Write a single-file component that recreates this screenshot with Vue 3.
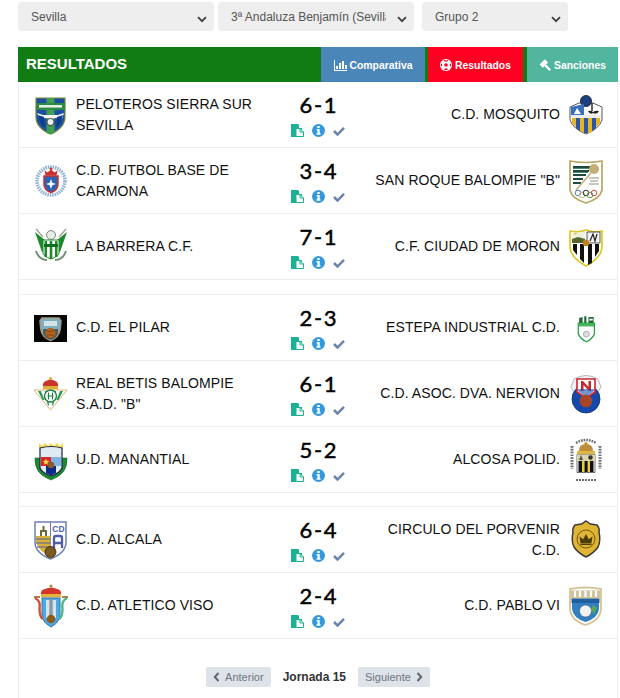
<script setup>
const crests = {
  peloteros: `<path d="M2 3H31V22Q31 33 16.500 39Q2 33 2 22Z" fill="#1a4fa3" stroke="#7a8a3a" stroke-width="1.200"/><path d="M12.500 3h8v35l-4 1.500-4-1.500z" fill="#3f9e50"/><rect x="2.600" y="8" width="27.800" height="7" fill="#2c8a45"/><rect x="5" y="10" width="23" height="2.600" fill="#e3efe0"/><path d="M3 18l6 2h15l6-2-2 6-6-1-5 1-5-1-6 1z" fill="#f4f4f4"/><circle cx="16.500" cy="27" r="3.600" fill="#eee" stroke="#222" stroke-width=".8"/><path d="M4 20l3 9 4 4-1-11zM29 20l-3 9-4 4 1-11z" fill="#0e3d8c"/>`,
  carmona: `<circle cx="17" cy="20" r="14" fill="#fff" stroke="#8fb0cf" stroke-width="3.600" stroke-dasharray="1.500 .9"/><path d="M10 15h14v8q0 6-7 8.500-7-2.500-7-8.500z" fill="#2a63b4" stroke="#c9302c" stroke-width="1.500"/><path d="M10.500 9.500l3 2 3.500-3 3.500 3 3-2-1 5H11.500z" fill="#c9302c"/><circle cx="17" cy="8" r="1.400" fill="#c9302c"/><path d="M17 18l1.300 3.700 3.700 1.300-3.700 1.300L17 28l-1.300-3.700L12 23l3.700-1.300z" fill="#fff"/>`,
  barrera: `<path d="M1 5l11 9v11H8zM33 5L22 14v11h4z" fill="#1c8a2b"/><path d="M2 2l7 8M32 2l-7 8" stroke="#9aa69a" stroke-width="1.400"/><circle cx="17" cy="8" r="4.500" fill="#e5ece5" stroke="#4d5a4d" stroke-width=".7"/><path d="M9 13h16v13q0 3-8 6-8-3-8-6z" fill="#fff" stroke="#1c8a2b"/><path d="M10.500 14H13v16h-2.500zM15.700 14h2.600v18h-2.600zM21 14h2.500v16H21z" fill="#1c8a2b"/><rect x="10" y="17" width="14" height="3" fill="#0f6d20"/><path d="M2 24q3 9 11 9M32 24q-3 9-11 9" fill="none" stroke="#6f9174" stroke-width="2"/>`,
  pilar: `<rect x="0" y="7" width="33" height="27" fill="#050505"/><path d="M8 10h17l2 3-1 9q-1 7-9.500 10.500Q8 29 7 22l-1-9z" fill="#7fb0c2" stroke="#a8987c" stroke-width="1.600"/><path d="M10 13h13v5H10z" fill="#d3e4e8"/><path d="M9 21h15v4q-1 5-7.500 7Q10 30 9 25z" fill="#4b5a5e"/><circle cx="16.500" cy="25" r="5" fill="#b5611b"/><path d="M13 23q4 2 7-1M13 27q4-1 7 1" stroke="#6e3a10" fill="none" stroke-width=".7"/>`,
  betis: `<path d="M0 16h33L16.500 36z" fill="#fff" stroke="#dcb672" stroke-width="1"/><path d="M4 17h3l3.500 9-2 0zM11 17h3l1 15-1.500-1.500zM19 17h3l-2.500 13.500L18 32zM26 17h3l-4.500 9-2 0z" fill="#2c9a55"/><circle cx="16.500" cy="22" r="6" fill="#fff" stroke="#1c7f40" stroke-width="1.400"/><path d="M14.500 18.500v7M18.500 18.500v7M13.500 22h6" stroke="#1c7f40" stroke-width="1.100"/><path d="M9 14q-1-6 3-7 4.500-3 9 0 4 1 3 7z" fill="#c8352b"/><rect x="9" y="12" width="15" height="3.200" fill="#e0ad35"/><circle cx="16.500" cy="4.500" r="1.600" fill="#e0ad35"/>`,
  manantial: `<path d="M5 3l3 3 3-3 3 3 3-3 3 3 3-3 3 3 3-3v6q-12-3-24 0z" fill="#f4da48"/><path d="M1 18q-1 16 16 22 17-6 16-22l-5 0v10l-11 8-11-8V18z" fill="#1c8a33" stroke="#14682a" stroke-width=".6"/><path d="M6 8q11-3 22 0v20q-2 5-11 8-9-3-11-8z" fill="#dfeaf5" stroke="#1b2a44" stroke-width="1.200"/><rect x="7" y="17" width="10" height="9" fill="#d7262c"/><rect x="17" y="17" width="10" height="9" fill="#7fb4e4"/><path d="M12 18.500l.9 2.200 2.300.2-1.700 1.500.5 2.300-2-1.200-2 1.200.5-2.300-1.700-1.500 2.300-.2z" fill="#f3dc43"/><path d="M12 26h10v7l-5 2.500-5-2.500z" fill="#0a2a88"/><circle cx="17" cy="25" r="3.300" fill="#8a5a2b"/>`,
  alcala: `<path d="M1 2H32V22Q32 33 16.500 39Q1 33 1 22Z" fill="#fff" stroke="#6f7db8" stroke-width="1.500"/><path d="M16.500 2v30" stroke="#6f7db8" stroke-width="1"/><path d="M2 16h14.500v20Q5 32 2 22z" fill="#d8b13a"/><path d="M2 19h14.500M2 23h14.500M3 27h13.500" stroke="#4e5f9e" stroke-width="1.200"/><path d="M7 16v-5h5v5M9.500 11V6" stroke="#6f6a45" stroke-width="2" fill="none"/><text x="24.500" y="12" class="crest-text" font-size="8.500">CD</text><path d="M20 28V18q0-2 2-2h4q2 0 2 2v10M20 23h8" fill="none" stroke="#4e5fa8" stroke-width="2.300"/><circle cx="16.500" cy="32" r="5.500" fill="#7a5a1d" stroke="#2d2208" stroke-width=".8"/>`,
  viso: `<path d="M7 9q-1-5 4-6 6-3 12 0 5 1 4 6z" fill="#d2352b"/><rect x="7" y="8" width="20" height="3.500" fill="#e3b23c"/><circle cx="17" cy="0" r="1.500" fill="#b5892a"/><path d="M8 12h18v20q-3 6-9 9-6-3-9-9z" fill="#4ea8e2" stroke="#3377ad"/><path d="M12 14h10v18H12z" fill="#d5e5f0"/><path d="M15.300 13h3.400v20h-3.400z" fill="#8d98a3"/><circle cx="17" cy="33" r="4.300" fill="#8a5a1f"/><path d="M1 12q6 3 4.500 11 0 7 3 10" fill="none" stroke="#d4512b" stroke-width="2.400"/><path d="M33 12q-6 3-4.500 11 0 7-3 10" fill="none" stroke="#49b98a" stroke-width="2.400"/><path d="M0 11h6M28 11h6" stroke="#8a5a1f" stroke-width="1.400"/>`,
  mosquito: `<path d="M1 12l9-4h14l9 4v13q-3 9-16 14Q4 34 1 25z" fill="#fff" stroke="#555" stroke-width="1"/><circle cx="17" cy="6" r="5.500" fill="#1f3f85" stroke="#111" stroke-width=".8"/><path d="M2 12l13-3v11H2z" fill="#3a6fc0"/><path d="M8 13l4 6H5z" fill="#fff"/><path d="M19 16q3-1 5 1 3-2 6-1-2 4-6 2-3 2-5-2z" fill="#222"/><path d="M23 8v8" stroke="#222" stroke-width="1.400"/><rect x="2" y="20" width="30" height="3" fill="#ececec"/><path d="M3 23h4v9l-4-4zM11 23h4v15l-4-2zM19 23h4v14l-4 1.500zM27 23h4v5l-4 4z" fill="#e6b422"/><path d="M7 23h4v13l-4-3zM15 23h4v15h-4zM23 23h4v10l-4 3z" fill="#2f55a0"/>`,
  sanroque: `<path d="M1 0q16 3 32 0v29q-2 9-16 13Q3 38 1 29z" fill="#fff" stroke="#b9a765" stroke-width="1.700"/><path d="M4 5h18v2H4zM4 9h16v2H4zM4 13h13v2H4zM4 17h10v2H4zM4 21h8v2H4z" fill="#1f4a40"/><path d="M4 7h17v1H4zM4 11h15v1H4z" fill="#4b8a6a"/><circle cx="25" cy="8" r="5" fill="#c3ae78"/><path d="M22 12L7 29" stroke="#c3ae78" stroke-width="1.600"/><path d="M20 17h10M21 20h8M20 23h10" stroke="#8f8f7c" stroke-width="1.100"/><g fill="none" stroke-width="1"><circle cx="9" cy="32" r="2.800" stroke="#4d7bc8"/><circle cx="13" cy="34" r="2.800" stroke="#c9c27a"/><circle cx="17" cy="32" r="2.800" stroke="#333"/><circle cx="21" cy="34" r="2.800" stroke="#48a35a"/><circle cx="25" cy="32" r="2.800" stroke="#d24a4a"/></g>`,
  moron: `<path d="M1 4q8 2 16-1 8 3 16 1v16q0 10-16 19Q1 30 1 20z" fill="#fff" stroke="#dfc52e" stroke-width="1.700"/><path d="M3 16h13V5L3 6z" fill="#eef0e0"/><path d="M3 12l6-2 7 2v4H3z" fill="#56652f"/><path d="M5 6l1.500 2L8 6z" fill="#e0c22a"/><path d="M18 5h13v11H18z" fill="#f1f1f1" stroke="#333" stroke-width=".8"/><path d="M21 14l3-7 2 7 2-7" fill="none" stroke="#222" stroke-width="1.200"/><path d="M4 17h4v11l-4-5zM11 17h4v19l-4-4zM19 17h4v19l-4 2zM26 17h4v7l-4 6z" fill="#111"/><circle cx="17" cy="16" r="3.300" fill="#b5871e"/>`,
  estepa: `<g transform="translate(2.500 4) scale(.85)"><path d="M8 13h19v13q-3 6-9.500 9-6.500-3-9.500-9z" fill="#fff" stroke="#2aa04a" stroke-width="1.500"/><path d="M9 7l4-1v8H9zM15 5h2.500v9H15zM20 6h6v8h-6z" fill="#1c6b31"/><path d="M12 7h1M21 8h4v2h-4z" fill="#fff"/><rect x="8.500" y="13" width="18" height="4" fill="#47b45d"/><circle cx="17.500" cy="26" r="3.500" fill="#ddd" stroke="#888" stroke-width=".7"/></g>`,
  nervion: `<path d="M5 5q12-7 24 0l3 8-3 5H5l-3-5z" fill="#eef2f6" stroke="#9fa9b4" stroke-width=".8"/><circle cx="17" cy="25" r="14" fill="#1448ab" stroke="#0f2f75" stroke-width=".8"/><path d="M8 5h18v13l-9 6-9-6z" fill="#fff" stroke="#c9262c" stroke-width="1.600"/><path d="M12 17V7h2l5.500 6V7H22v10h-2l-5.500-6v6z" fill="#c9262c"/><path d="M9 17l8 6 8-6v-2H9z" fill="#1448ab" opacity=".6"/><circle cx="17" cy="27" r="6.300" fill="#a94524"/>`,
  alcosa: `<path d="M7 3q10-6 20 0" fill="none" stroke="#6f6f6f" stroke-width="2.500" stroke-dasharray="1.700 1"/><path d="M3 6v23M31 6v23" stroke="#6f6f6f" stroke-width="3" stroke-dasharray="1.700 1.100"/><path d="M10 11q0-7 7-7t7 7z" fill="#bd8f3c"/><circle cx="17" cy="3.500" r="1.600" fill="#c58e2e"/><rect x="8" y="11" width="18" height="3.500" fill="#e0b647"/><path d="M8 14.500h18v18H8z" fill="#fff" stroke="#333" stroke-width=".7"/><rect x="8" y="14.500" width="18" height="6.500" fill="#dbd3ab"/><circle cx="21.500" cy="17.500" r="2.200" fill="#333"/><path d="M12 15l2 5h-4z" fill="#555"/><path d="M9.500 21h3.500v11H9.500zM15.300 21h3.500v11h-3.500zM21 21h3.500v11H21z" fill="#111"/><path d="M13 21h2.300v11H13zM18.800 21H21v11h-2.200z" fill="#e8cf36"/><path d="M7 40h20" stroke="#6f6f6f" stroke-width="1.800" stroke-dasharray="2 1"/>`,
  porvenir: `<path d="M17 1l4.500 3 6.500 1q3 4 2 7 2 9-1 15-4 6-12 10-8-4-12-10-3-6-1-15-1-3 2-7l6.500-1z" fill="#e1b534" stroke="#3d3d3d" stroke-width="1.500"/><circle cx="17" cy="19" r="9" fill="none" stroke="#6f5712" stroke-width="1"/><path d="M11.500 23l-1-6.500 3.700 2.800L17 14l2.800 5.300 3.700-2.800-1 6.500z" fill="#4d3c0c"/><rect x="11.500" y="23.500" width="11" height="1.500" fill="#4d3c0c"/>`,
  pablo: `<path d="M1 3q15.500-3 31 0v19q0 12-15.500 17Q1 34 1 22z" fill="#fff" stroke="#d5c394" stroke-width="1.800"/><rect x="2" y="4.500" width="29" height="8" fill="#cfc199"/><path d="M6 5v6M11 5v6M16.500 5v6M22 5v6M27 5v6" stroke="#fff" stroke-width="2.200"/><rect x="2.500" y="12.500" width="28" height="4.500" fill="#1e5f9f"/><path d="M3 17h27v6q-1 9-13.500 13Q4 32 3 23z" fill="#2f7fc1"/><circle cx="16.500" cy="25" r="6" fill="#f2f2f2" stroke="#557" stroke-width=".6"/><path d="M24 19l4 3-3 6-3-4z" fill="#5aa65a"/>`
}
const rows = [
  { home: 'PELOTEROS SIERRA SUR SEVILLA', hc: 'peloteros', score: '6 - 1', away: 'C.D. MOSQUITO', ac: 'mosquito' },
  { home: 'C.D. FUTBOL BASE DE CARMONA', hc: 'carmona', score: '3 - 4', away: 'SAN ROQUE BALOMPIE "B"', ac: 'sanroque' },
  { home: 'LA BARRERA C.F.', hc: 'barrera', score: '7 - 1', away: 'C.F. CIUDAD DE MORON', ac: 'moron', spacer: 'tall' },
  { home: 'C.D. EL PILAR', hc: 'pilar', score: '2 - 3', away: 'ESTEPA INDUSTRIAL C.D.', ac: 'estepa' },
  { home: 'REAL BETIS BALOMPIE S.A.D. "B"', hc: 'betis', score: '6 - 1', away: 'C.D. ASOC. DVA. NERVION', ac: 'nervion' },
  { home: 'U.D. MANANTIAL', hc: 'manantial', score: '5 - 2', away: 'ALCOSA POLID.', ac: 'alcosa', spacer: 'short' },
  { home: 'C.D. ALCALA', hc: 'alcala', score: '6 - 4', away: 'CIRCULO DEL PORVENIR C.D.', ac: 'porvenir' },
  { home: 'C.D. ATLETICO VISO', hc: 'viso', score: '2 - 4', away: 'C.D. PABLO VI', ac: 'pablo' }
]
const selects = [
  { cls: 'wide', value: 'Sevilla' },
  { cls: 'wide', value: '3ª Andaluza Benjamín (Sevilla)' },
  { cls: 'narrow', value: 'Grupo 2' }
]
</script>

<template>
  <div class="page">
    <div class="filters">
      <div v-for="s in selects" :key="s.value" class="select-wrap" :class="s.cls">
        <select class="select"><option>{{ s.value }}</option></select>
        <svg class="chevron" width="10" height="7" viewBox="0 0 10 7"><path d="M1 1.200l4 4 4-4" fill="none" stroke="#444" stroke-width="1.900"/></svg>
      </div>
    </div>

    <section class="card">
      <header class="bar">
        <h2 class="title">RESULTADOS</h2>
        <a class="tab blue">
          <svg width="13" height="11" viewBox="0 0 13 11"><path d="M0 0h1v10h12v1H0z M2 6h2v3H2z M5 3h2v6H5z M8 1h2v8H8z M11 5h2v4h-2z" fill="#fff"/></svg>
          Comparativa
        </a>
        <a class="tab red">
          <svg width="12" height="12" viewBox="0 0 12 12"><circle cx="6" cy="6" r="6" fill="#fff"/><path d="M6 4l1.900 1.400-.7 2.200H4.800l-.7-2.200zM4.200 1l1.800.6L7.800 1l.4.900L6 2.800 3.800 1.900zM1 4.300l1.300 1.300-.4 2-1-.7zM11 4.300L9.700 5.600l.4 2 1-.7zM4.300 9.800L6 9.300l1.700.5-.4 1.200H4.700z" fill="#ff0022"/></svg>
          Resultados
        </a>
        <a class="tab teal">
          <svg width="12" height="12" viewBox="0 0 12 12"><g fill="#fff"><rect x="-3.500" y="-2" width="7.500" height="4.500" transform="translate(4.500 4.500) rotate(-45)"/><rect x="0" y="-1.100" width="8" height="2.200" transform="translate(5.500 5.500) rotate(45)"/></g></svg>
          Sanciones
        </a>
      </header>

      <template v-for="r in rows" :key="r.home">
        <div class="row">
          <svg class="crest home-crest" width="34" height="40" viewBox="0 0 34 40" v-html="crests[r.hc]"></svg>
          <div class="team">{{ r.home }}</div>
          <div class="mid">
            <div class="score">{{ r.score }}</div>
            <div class="actions">
              <svg width="13" height="13" viewBox="0 0 13 13"><path d="M0 0h7l1 1v3h3v4H6v5H0z" fill="#19b394"/><path d="M5 4.500h4l3.500 3.500v4.500H5z" fill="#fff" stroke="#19b394"/><path d="M9 4.500V8h3.500" fill="none" stroke="#19b394"/></svg>
              <svg width="13" height="13" viewBox="0 0 13 13"><circle cx="6.500" cy="6.500" r="6.500" fill="#3498db"/><path d="M5.300 1.900h2.400v2H5.300zM4.700 5h3v4.300h.8v1.500H4.500V9.300h1V6.500h-.8z" fill="#fff"/></svg>
              <svg width="12" height="10" viewBox="0 0 12 10"><path d="M1 5l3.500 3.500L11 1.800" fill="none" stroke="#6b84a8" stroke-width="2.500"/></svg>
            </div>
          </div>
          <div class="team away">{{ r.away }}</div>
          <svg class="crest away-crest" width="34" height="40" viewBox="0 0 34 40" v-html="crests[r.ac]"></svg>
        </div>
        <div v-if="r.spacer" class="spacer" :class="r.spacer"></div>
      </template>

      <nav class="pager">
        <a class="page-btn">
          <svg width="7" height="10" viewBox="0 0 7 10"><path d="M5.500 1L1.800 5l3.700 4" fill="none" stroke="#5f6670" stroke-width="2"/></svg>
          Anterior
        </a>
        <strong class="round">Jornada 15</strong>
        <a class="page-btn">
          Siguiente
          <svg width="7" height="10" viewBox="0 0 7 10"><path d="M1.500 1l3.700 4-3.700 4" fill="none" stroke="#5f6670" stroke-width="2"/></svg>
        </a>
      </nav>
    </section>
  </div>
</template>

<style scoped>
.page {
  height: 698px;
  overflow: hidden;
  padding: 2px 2px 0 18px;
  box-sizing: border-box;
  background: #fff;
  font-family: "Liberation Sans", Arial, sans-serif;
}
.filters {
  display: flex;
  gap: 4px;
  height: 29px;
  margin-bottom: 16px;
}
.select-wrap {
  position: relative;
  height: 29px;
}
.wide { width: 196px; }
.narrow { width: 146px; margin-left: 4px; }
.select {
  appearance: none;
  width: 100%;
  height: 100%;
  border: 0;
  border-radius: 4px;
  background: #eee;
  color: #555;
  font: 12px "Liberation Sans", Arial, sans-serif;
  padding: 0 28px 0 13px;
  outline: 0;
}
.chevron {
  position: absolute;
  right: 7px;
  top: 14px;
}
.card {
  border-left: 1px solid #eee;
  border-right: 1px solid #eee;
  width: 600px;
  box-sizing: border-box;
  min-height: 651px;
}
.bar {
  display: flex;
  align-items: stretch;
  height: 35px;
  margin: 0 -1px;
  background: #107c13;
  color: #fff;
}
.title {
  margin: 0;
  flex: 1;
  padding-left: 8px;
  font-size: 15px;
  line-height: 34px;
  font-weight: 700;
}
.tab {
  display: flex;
  align-items: center;
  justify-content: center;
  gap: 3px;
  font-size: 10.4px;
  font-weight: 700;
  padding-top: 1px;
}
.blue { width: 104px; background: #4b86b9; }
.red { width: 95px; margin-left: 3px; background: #ff0022; }
.teal { width: 91px; margin-left: 4px; background: #52b59d; }
.row {
  display: grid;
  grid-template-columns: 57px 192px 100px 192px 58px;
  align-items: center;
  height: 65px;
  border-bottom: 1px solid #eee;
}
.crest {
  display: block;
  overflow: visible;
}
.crest :deep(.crest-text) {
  font-family: "Liberation Sans", Arial, sans-serif;
  font-weight: 700;
  fill: #4e5fa8;
  text-anchor: middle;
}
.home-crest { margin-left: 15px; }
.away-crest { margin-left: 9px; }
.team {
  font-size: 14px;
  line-height: 21px;
  letter-spacing: .09px;
  color: #111;
}
.away { text-align: right; }
.mid {
  display: flex;
  flex-direction: column;
  align-items: center;
  align-self: start;
  padding-top: 10px;
}
.score {
  font-family: Lato, sans-serif;
  font-size: 22px;
  font-weight: 400;
  -webkit-text-stroke: .5px #000;
  line-height: 26px;
  color: #000;
  word-spacing: -4px;
}
.actions {
  display: flex;
  align-items: center;
  gap: 8px;
  margin-top: 6px;
}
.spacer { border-bottom: 1px solid #eee; }
.tall { height: 14px; }
.short { height: 13px; }
.pager {
  display: flex;
  justify-content: center;
  align-items: center;
  gap: 12px;
  height: 20px;
  margin-top: 28px;
}
.page-btn {
  display: flex;
  align-items: center;
  gap: 5px;
  height: 20px;
  padding: 0 7px;
  border-radius: 2px;
  background: #dee3ea;
  color: #6c757d;
  font-size: 11px;
}
.round {
  font-size: 12px;
  color: #333;
}
</style>
